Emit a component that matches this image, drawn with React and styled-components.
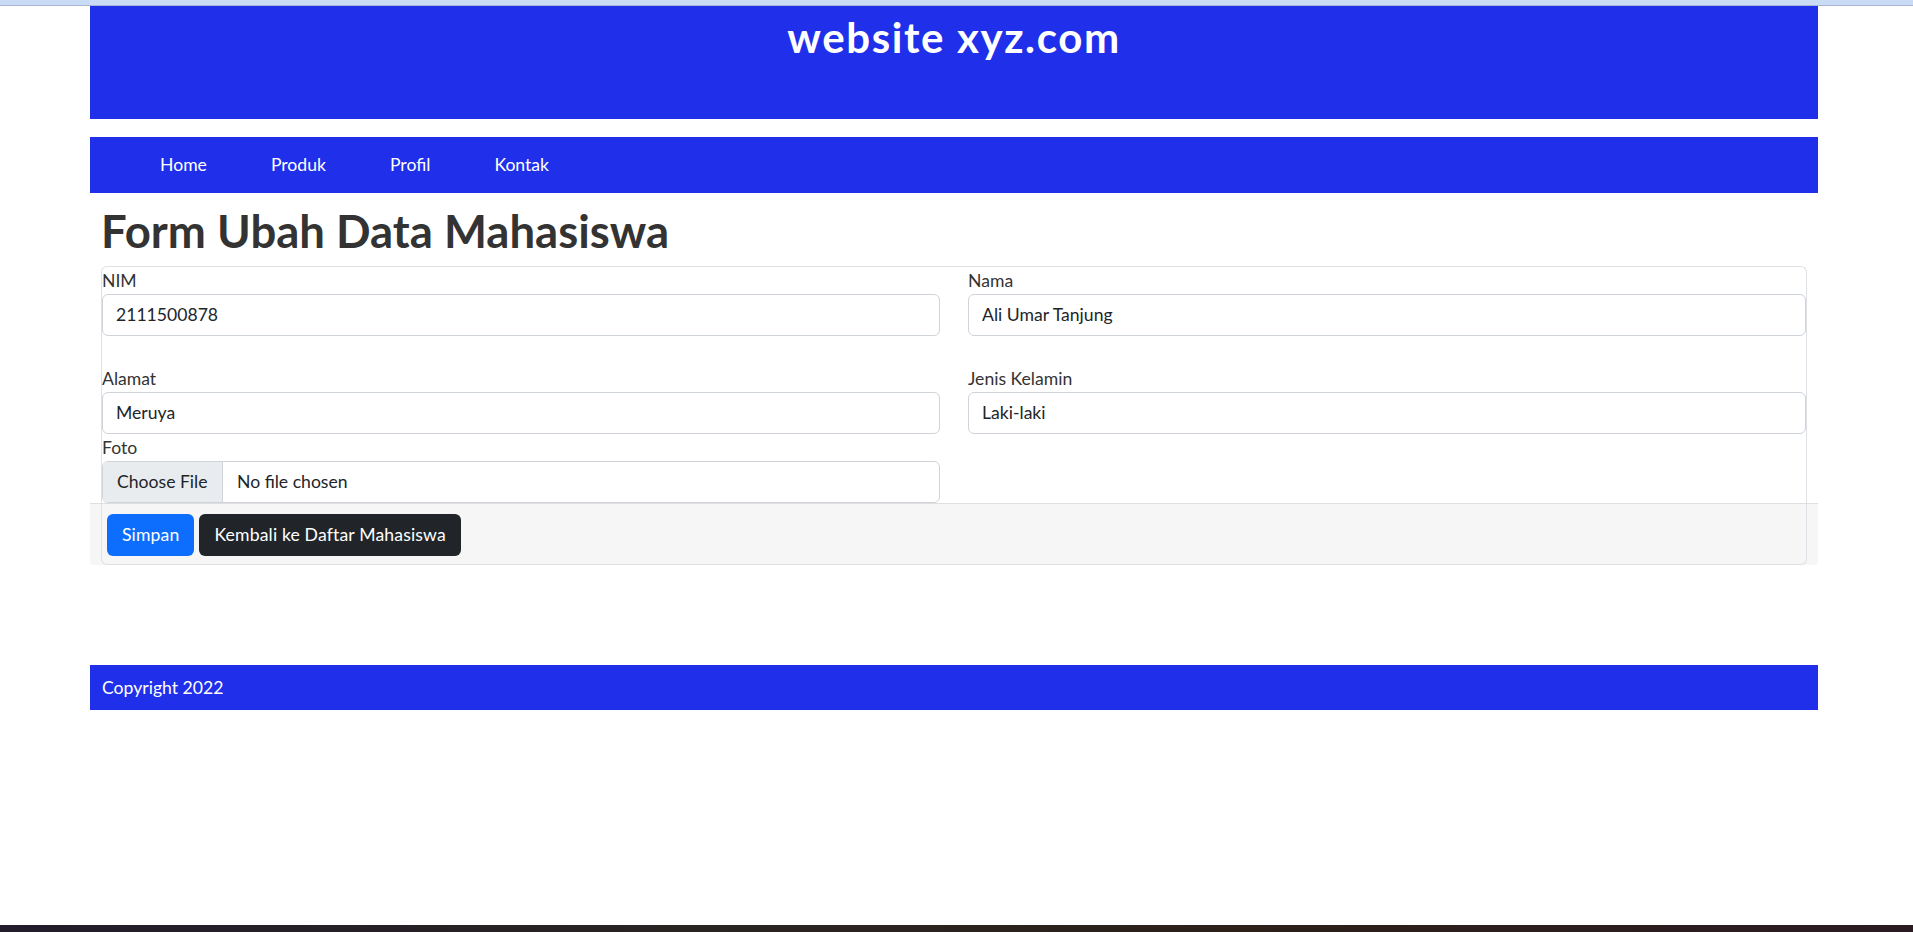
import styled, { createGlobalStyle } from "styled-components";

const GlobalStyle = createGlobalStyle`
  html, body, #root {
    margin: 0;
    padding: 0;
    min-height: 100%;
  }
  body {
    font-family: Lato, "Open Sans", sans-serif;
    color: #212529;
    background-color: #fff;
  }
  * {
    box-sizing: border-box;
  }
`;

const BLUE = "#1f2fea";

const fields = [
  [
    { label: "NIM", value: "2111500878" },
    { label: "Nama", value: "Ali Umar Tanjung" },
  ],
  [
    { label: "Alamat", value: "Meruya" },
    { label: "Jenis Kelamin", value: "Laki-laki" },
  ],
];

const menu = ["Home", "Produk", "Profil", "Kontak"];

const App = () => {
  return (
    <>
      <GlobalStyle />
      <Page>
        <TopStrip />
        <Main>
          <Container>
            <Header>
              <SiteTitle>website xyz.com</SiteTitle>
            </Header>

            <Nav>
              <Menu>
                {menu.map((item) => (
                  <MenuItem key={item}>
                    <MenuLink href="#">{item}</MenuLink>
                  </MenuItem>
                ))}
              </Menu>
            </Nav>

            <PageTitle>Form Ubah Data Mahasiswa</PageTitle>

            <FormCard>
              {fields.map((row, i) => (
                <FieldGrid key={i} $gapAfter={i === 0 ? 29 : 0}>
                  {row.map((f) => (
                    <Field key={f.label}>
                      <Label>{f.label}</Label>
                      <Input type="text" defaultValue={f.value} />
                    </Field>
                  ))}
                </FieldGrid>
              ))}
              <FieldGrid $gapAfter={0}>
                <Field>
                  <Label>Foto</Label>
                  <FileBox>
                    <FileButton>Choose File</FileButton>
                    <FileName>No file chosen</FileName>
                  </FileBox>
                </Field>
              </FieldGrid>
            </FormCard>

            <FooterBand>
              <FooterInner>
                <Button $variant="primary">Simpan</Button>
                <Button $variant="dark">Kembali ke Daftar Mahasiswa</Button>
              </FooterInner>
            </FooterBand>

            <Footer>Copyright 2022</Footer>
          </Container>
        </Main>
        <Taskbar />
      </Page>
    </>
  );
};

export default App;

const Page = styled.div`
  min-height: 100vh;
  display: flex;
  flex-direction: column;
`;

const TopStrip = styled.div`
  height: 6px;
  background-color: #cadcf5;
  border-bottom: 1px solid #a6b7d2;
`;

const Main = styled.main`
  flex: 1;
`;

const Container = styled.div`
  width: 1728px;
  margin-left: 90px;
`;

const Header = styled.header`
  height: 113px;
  background-color: ${BLUE};
  padding-top: 6px;
  text-align: center;
`;

const SiteTitle = styled.h1`
  margin: 0;
  font-size: 42px;
  font-weight: 700;
  letter-spacing: 1.6px;
  line-height: 1.2;
  color: #fff;
`;

const Nav = styled.nav`
  margin-top: 18px;
  height: 56px;
  background-color: ${BLUE};
  display: flex;
  align-items: center;
`;

const Menu = styled.ul`
  list-style: none;
  margin: 0;
  padding: 0 0 0 40px;
  display: flex;
  gap: 4px;
`;

const MenuItem = styled.li`
  display: block;
`;

const MenuLink = styled.a`
  display: block;
  padding: 0 30px;
  color: #fff;
  font-size: 17.6px;
  line-height: 1.5;
  text-decoration: none;
`;

const PageTitle = styled.h2`
  margin: 11px 0 7px;
  padding: 0 11px;
  font-size: 45.5px;
  font-weight: 700;
  line-height: 1.2;
  color: #333;
`;

const FormCard = styled.div`
  margin: 0 11px;
  border: 1px solid #dee2e6;
  border-bottom: none;
  border-radius: 6px 6px 0 0;
`;

const FieldGrid = styled.div`
  display: grid;
  grid-template-columns: 1fr 1fr;
  column-gap: 28px;
  margin-bottom: ${(props) => props.$gapAfter}px;
`;

const Field = styled.div`
  display: flex;
  flex-direction: column;
`;

const Label = styled.label`
  font-size: 17.6px;
  line-height: 27px;
  color: #333;
`;

const Input = styled.input`
  height: 42px;
  padding: 0 13px;
  border: 1px solid #ced4da;
  border-radius: 6px;
  font-family: inherit;
  font-size: 17.6px;
  color: #212529;
  background-color: #fff;
  outline: none;
`;

const FileBox = styled.div`
  height: 42px;
  display: flex;
  align-items: stretch;
  border: 1px solid #ced4da;
  border-radius: 6px;
  overflow: hidden;
  font-size: 17.6px;
  color: #212529;
`;

const FileButton = styled.span`
  width: 120px;
  display: flex;
  align-items: center;
  padding-left: 14px;
  background-color: #e9ecef;
  border-right: 1px solid #ced4da;
`;

const FileName = styled.span`
  display: flex;
  align-items: center;
  padding-left: 14px;
`;

const FooterBand = styled.div`
  background-color: #f6f6f6;
  border-top: 1px solid #dfdfdf;
  border-radius: 0 0 4px 4px;
`;

const FooterInner = styled.div`
  margin: 0 11px;
  padding: 10px 5px 8px;
  display: flex;
  gap: 5px;
  border: 1px solid #dee2e6;
  border-top: none;
  border-radius: 0 0 6px 6px;
`;

const Button = styled.button`
  height: 42px;
  padding: 0 15px;
  border: none;
  border-radius: 6px;
  font-family: inherit;
  font-size: 17.6px;
  letter-spacing: 0.15px;
  color: #fff;
  cursor: pointer;
  background-color: ${(props) =>
    props.$variant === "primary" ? "#0d6efd" : "#212529"};
`;

const Footer = styled.footer`
  margin-top: 100px;
  height: 45px;
  padding-left: 12px;
  display: flex;
  align-items: center;
  background-color: ${BLUE};
  color: #fff;
  font-size: 17.6px;
`;

const Taskbar = styled.div`
  height: 7px;
  background: linear-gradient(90deg, #221c2b, #2a2421 40%, #2c2019 65%, #2a1b22);
`;
